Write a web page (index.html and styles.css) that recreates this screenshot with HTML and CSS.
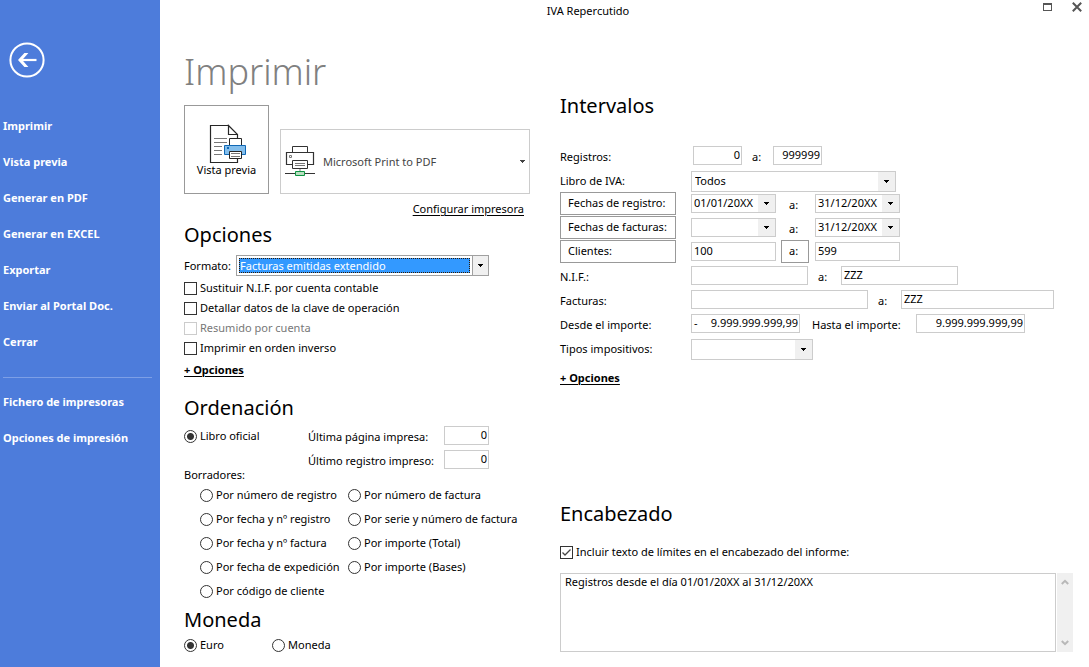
FILE: index.html
```html
<!DOCTYPE html>
<html lang="es">
<head>
<meta charset="utf-8">
<title>IVA Repercutido</title>
<link rel="stylesheet" href="styles.css">
</head>
<body>
<div class="app">
  <nav class="sidebar">
    <button class="back" type="button" aria-label="Volver">
      <svg width="36" height="36" viewBox="0 0 36 36" fill="none" stroke="#fff">
        <circle cx="18" cy="18" r="16.6" stroke-width="2"/>
        <path d="M10.5 18H27.500" stroke-width="2.2"/>
        <path d="M9 18L15.400 11.100H19.400L13.200 18L19.400 24.900H15.400Z" fill="#fff" stroke="none"/>
      </svg>
    </button>
    <a class="nav-link" href="#">Imprimir</a>
    <a class="nav-link" href="#">Vista previa</a>
    <a class="nav-link" href="#">Generar en PDF</a>
    <a class="nav-link" href="#">Generar en EXCEL</a>
    <a class="nav-link" href="#">Exportar</a>
    <a class="nav-link" href="#">Enviar al Portal Doc.</a>
    <a class="nav-link" href="#">Cerrar</a>
    <hr class="nav-rule">
    <a class="nav-link" href="#">Fichero de impresoras</a>
    <a class="nav-link" href="#">Opciones de impresión</a>
  </nav>

  <div class="window">
    <header class="titlebar">
      <span class="window-title">IVA Repercutido</span>
      <div class="window-buttons">
        <button class="window-button" type="button" aria-label="Maximizar">
          <svg width="10" height="10" viewBox="0 0 10 10" shape-rendering="crispEdges"><path d="M1 1.5h8v7h-8z" fill="none" stroke="#555"/><path d="M1 1h8v2h-8z" fill="#555"/></svg>
        </button>
        <button class="window-button" type="button" aria-label="Cerrar ventana">
          <svg width="10" height="10" viewBox="0 0 10 10" fill="none" stroke="#555" stroke-width="2"><path d="M.8.8l8.4 8.4M9.2.8L.8 9.2"/></svg>
        </button>
      </div>
    </header>

    <main class="content">
      <div class="column-left">
        <h1 class="page-title">Imprimir</h1>
        <div class="printer-row">
          <button class="preview" type="button">
            <svg width="38" height="40" viewBox="0 0 38 40" fill="none">
              <path d="M19.5 1.5H1.5v37h27v-5M28.5 14v-3.5l-9-9v9h9" stroke="#262626" stroke-width="1.2"/>
              <path d="M5 14.5h13M5 18.5h13M5 22.5h8M5 26.5h8M5 30.5h8" stroke="#777"/>
              <path d="M20.5 21.5v-7h12v7" fill="#fff" stroke="#262626"/>
              <path d="M15.5 21.5h21v9h-21z" fill="#83beec" stroke="#1068b5"/>
              <path d="M18 23h2v2h-2z" fill="#1068b5"/>
              <path d="M20.5 27.500h12v7h-12z" fill="#fff" stroke="#262626"/>
              <path d="M22 29.500h9M22 32.500h9" stroke="#777"/>
            </svg>
            <span>Vista previa</span>
          </button>
          <button class="printer" type="button">
            <svg width="30" height="31" viewBox="0 0 30 31" fill="none">
              <path d="M7.500 6.500v-6h15v6" fill="#fff" stroke="#333"/>
              <path d="M7.500 18.500h-6v-12h27v12h-6" stroke="#333" stroke-width="1.2"/>
              <path d="M4.500 9.500h2v2h-2z" stroke="#777"/>
              <path d="M7.500 14.500h15v8h-15z" fill="#fff" stroke="#333"/>
              <path d="M10 17.500h10M10 19.500h10" stroke="#777"/>
              <path d="M15 23v3" stroke="#bbb" stroke-width="2"/>
              <path d="M0 27.500h30" stroke="#333"/>
              <path d="M10.500 25.500h9v4h-9z" fill="#b9dfc0" stroke="#0f9444"/>
            </svg>
            <span class="printer-name">Microsoft Print to PDF</span>
            <svg width="5" height="3" viewBox="0 0 5 3" shape-rendering="crispEdges" fill="#444"><path d="M0 0h5v1h-5zM1 1h3v1h-3zM2 2h1v1h-1z"/></svg>
          </button>
        </div>
        <a class="configure" href="#">Configurar impresora</a>

        <h2 class="section-title">Opciones</h2>
        <div class="format-row">
          <label for="formato">Formato:</label>
          <span class="format-box">
            <select class="combo combo-active" id="formato"><option>Facturas emitidas extendido</option></select>
          </span>
        </div>
        <label class="check"><input type="checkbox">Sustituir N.I.F. por cuenta contable</label>
        <label class="check"><input type="checkbox">Detallar datos de la clave de operación</label>
        <label class="check check-disabled"><input type="checkbox" disabled>Resumido por cuenta</label>
        <label class="check"><input type="checkbox">Imprimir en orden inverso</label>
        <a class="more" href="#">+ Opciones</a>

        <h2 class="section-title title-order">Ordenación</h2>
        <div class="order-head">
          <div class="order-kind">
            <label class="check"><input type="radio" name="orden" checked>Libro oficial</label>
            <span>Borradores:</span>
          </div>
          <div class="order-last">
            <label for="ult-pagina">Última página impresa:</label>
            <input class="field number" id="ult-pagina" value="0">
            <label for="ult-registro">Último registro impreso:</label>
            <input class="field number" id="ult-registro" value="0">
          </div>
        </div>
        <div class="drafts">
          <label class="check"><input type="radio" name="orden">Por número de registro</label>
          <label class="check"><input type="radio" name="orden">Por número de factura</label>
          <label class="check"><input type="radio" name="orden">Por fecha y nº registro</label>
          <label class="check"><input type="radio" name="orden">Por serie y número de factura</label>
          <label class="check"><input type="radio" name="orden">Por fecha y nº factura</label>
          <label class="check"><input type="radio" name="orden">Por importe (Total)</label>
          <label class="check"><input type="radio" name="orden">Por fecha de expedición</label>
          <label class="check"><input type="radio" name="orden">Por importe (Bases)</label>
          <label class="check"><input type="radio" name="orden">Por código de cliente</label>
        </div>

        <h2 class="section-title">Moneda</h2>
        <div class="currency">
          <label class="check"><input type="radio" name="moneda" checked>Euro</label>
          <label class="check"><input type="radio" name="moneda">Moneda</label>
        </div>
      </div>

      <div class="column-right">
        <h2 class="section-title">Intervalos</h2>
        <div class="ranges">
          <div class="range range-records">
            <label class="range-label" for="reg-desde">Registros:</label>
            <input class="field number" id="reg-desde" value="0">
            <label class="to" for="reg-hasta">a:</label>
            <input class="field number" id="reg-hasta" value="999999">
          </div>
          <div class="range">
            <label class="range-label" for="libro">Libro de IVA:</label>
            <select class="combo combo-book" id="libro"><option>Todos</option></select>
          </div>
          <div class="range">
            <div class="range-label"><button class="range-button" type="button">Fechas de registro:</button></div>
            <select class="combo date" aria-label="Fecha de registro inicial"><option>01/01/20XX</option></select>
            <label class="to to-wide" for="freg-hasta">a:</label>
            <select class="combo date" id="freg-hasta"><option>31/12/20XX</option></select>
          </div>
          <div class="range">
            <div class="range-label"><button class="range-button" type="button">Fechas de facturas:</button></div>
            <select class="combo date" aria-label="Fecha de factura inicial"><option></option></select>
            <label class="to to-wide" for="ffac-hasta">a:</label>
            <select class="combo date" id="ffac-hasta"><option>31/12/20XX</option></select>
          </div>
          <div class="range">
            <div class="range-label"><button class="range-button" type="button">Clientes:</button></div>
            <input class="field client" aria-label="Cliente inicial" value="100">
            <div class="to to-wide"><button class="range-button to-button" type="button">a:</button></div>
            <input class="field client" aria-label="Cliente final" value="599">
          </div>
          <div class="range">
            <label class="range-label" for="nif-desde">N.I.F.:</label>
            <input class="field tax-id" id="nif-desde">
            <label class="to" for="nif-hasta">a:</label>
            <input class="field tax-id" id="nif-hasta" value="ZZZ">
          </div>
          <div class="range">
            <label class="range-label" for="fac-desde">Facturas:</label>
            <input class="field invoice-from" id="fac-desde">
            <label class="to" for="fac-hasta">a:</label>
            <input class="field invoice-to" id="fac-hasta" value="ZZZ">
          </div>
          <div class="range">
            <label class="range-label" for="imp-desde">Desde el importe:</label>
            <span class="field amount signed"><span>-</span><input class="amount-value" id="imp-desde" value="9.999.999.999,99"></span>
            <label class="to-amount" for="imp-hasta">Hasta el importe:</label>
            <input class="field amount number" id="imp-hasta" value="9.999.999.999,99">
          </div>
          <div class="range">
            <label class="range-label" for="tipos">Tipos impositivos:</label>
            <select class="combo combo-rates" id="tipos"><option></option></select>
          </div>
        </div>
        <a class="more" href="#">+ Opciones</a>

        <section class="heading-block">
          <h2 class="section-title">Encabezado</h2>
          <label class="check"><input type="checkbox" checked>Incluir texto de límites en el encabezado del informe:</label>
          <div class="note">
            <textarea class="note-text" aria-label="Texto del encabezado">Registros desde el día 01/01/20XX al 31/12/20XX</textarea>
            <div class="scrollbar">
              <svg width="8" height="8" viewBox="0 0 8 8" fill="none" stroke="#b8b8b8" stroke-width="2"><path d="M.8 6L4 2.800L7.200 6"/></svg>
              <svg width="8" height="8" viewBox="0 0 8 8" fill="none" stroke="#b8b8b8" stroke-width="2"><path d="M.8 2L4 5.200L7.200 2"/></svg>
            </div>
          </div>
        </section>
      </div>
    </main>
  </div>
</div>
</body>
</html>
```
FILE: styles.css
```css
*,
*::before,
*::after {
  box-sizing: border-box;
}

body {
  margin: 0;
  background: #fff;
  color: #000;
  font: 11px/16px "Noto Sans", "Open Sans", sans-serif;
}

button,
input,
select,
textarea {
  margin: 0;
  color: inherit;
  font: inherit;
}

a {
  color: inherit;
}

.app {
  display: flex;
  min-height: 100vh;
}

/* Navigation */

.sidebar {
  flex: none;
  width: 160px;
  padding: 42px 8px 0 3px;
  background: #4d7cdb;
  color: #fff;
}

.back {
  display: block;
  margin: 0 0 30px 6px;
  padding: 0;
  border: 0;
  background: none;
  line-height: 0;
}

.nav-link {
  display: block;
  font-weight: bold;
  line-height: 36px;
  text-decoration: none;
  white-space: nowrap;
}

.nav-rule {
  height: 1px;
  margin: 17px 0 6px;
  border: 0;
  background: #7d9fe6;
}

/* Title bar */

.window {
  flex: 1;
  min-width: 0;
}

.titlebar {
  display: flex;
  height: 22px;
}

.window-title {
  flex: 1;
  line-height: 22px;
  text-align: center;
}

.window-buttons {
  display: flex;
  align-items: flex-start;
  justify-content: flex-end;
  gap: 20px;
  width: 73px;
  padding: 2px 7px 0 0;
}

.window-button {
  padding: 0;
  border: 0;
  background: none;
  line-height: 0;
}

/* Main area */

.content {
  display: grid;
  grid-template-columns: minmax(0, 376fr) minmax(0, 513fr);
  padding: 0 16px 0 24px;
}

.column-left {
  display: flex;
  flex-direction: column;
  padding-top: 22px;
}

.column-right {
  display: flex;
  flex-direction: column;
  padding-top: 69px;
}

.page-title {
  margin: 0 0 5px;
  color: #808080;
  font-size: 36px;
  font-weight: 300;
  line-height: 56px;
}

.section-title {
  margin: 0;
  font-size: 20px;
  font-weight: 400;
  line-height: 30px;
}

.printer-row {
  display: flex;
  align-items: flex-end;
  gap: 11px;
  padding-right: 30px;
}

.preview {
  display: flex;
  flex-direction: column;
  align-items: center;
  width: 85px;
  height: 89px;
  padding: 18px 0 0;
  border: 1px solid #999;
  background: #fff;
  line-height: 12px;
  white-space: nowrap;
}

.preview svg {
  margin-left: 3px;
}

.printer {
  display: flex;
  flex: 1;
  align-items: center;
  gap: 8px;
  height: 65px;
  padding: 0 4px;
  border: 1px solid #ccc;
  background: #fff;
  color: #444;
  text-align: left;
}

.printer-name {
  flex: 1;
}

.configure {
  align-self: flex-end;
  margin: 4px 36px 0 0;
  line-height: 22px;
  text-underline-offset: 2px;
}

/* Fields */

.field {
  height: 19px;
  padding: 0 2px 1px;
  border: 1px solid #ccc;
  border-radius: 0;
  background: #fff;
}

.number {
  padding-right: 1px;
  text-align: right;
}

.combo {
  height: 21px;
  padding: 0 18px 0 3px;
  border: 1px solid #ccc;
  border-radius: 0;
  appearance: none;
  background:
    url("data:image/svg+xml,%3Csvg xmlns='http://www.w3.org/2000/svg' width='5' height='3' shape-rendering='crispEdges'%3E%3Cpath d='M0 0h5v1h-5zM1 1h3v1h-3zM2 2h1v1h-1z'/%3E%3C/svg%3E") right 6px center no-repeat,
    linear-gradient(#f0f0f0, #f0f0f0) right / 17px 100% no-repeat,
    #fff;
}

.format-row {
  display: flex;
  align-items: center;
  gap: 6px;
  margin: 5px 71px 2px 0;
}

.format-row label {
  width: 46px;
}

.format-box {
  position: relative;
  display: flex;
  flex: 1;
  height: 21px;
}

/* Focus rectangle over the selected value */
.format-box::after {
  position: absolute;
  inset: 3px 19px 3px 3px;
  border: 1px dotted #331a00;
  content: "";
  pointer-events: none;
}

.combo-active {
  flex: 1;
  min-width: 0;
  border-color: #a0a0a0;
  color: #fff;
  background:
    url("data:image/svg+xml,%3Csvg xmlns='http://www.w3.org/2000/svg' width='5' height='3' shape-rendering='crispEdges'%3E%3Cpath d='M0 0h5v1h-5zM1 1h3v1h-3zM2 2h1v1h-1z'/%3E%3C/svg%3E") right 5px center no-repeat,
    linear-gradient(90deg, #a0a0a0 1px, #f0f0f0 1px) right / 16px 100% no-repeat,
    linear-gradient(#39f, #39f) 2px 2px / calc(100% - 20px) calc(100% - 4px) no-repeat,
    #fff;
}

/* Tick boxes and radios */

.check {
  display: flex;
  align-items: center;
  gap: 3px;
  line-height: 20px;
  white-space: nowrap;
}

.check input {
  flex: none;
  width: 13px;
  height: 13px;
  border: 1px solid #333;
  appearance: none;
  background: #fff;
}

.check input[type="radio"] {
  border-radius: 50%;
}

.check input[type="radio"]:checked {
  background: radial-gradient(circle, #333 3px, #fff 4px);
}

.check input[type="checkbox"]:checked {
  background: url("data:image/svg+xml,%3Csvg xmlns='http://www.w3.org/2000/svg' width='11' height='11' fill='none' stroke='%23444' stroke-width='1.3'%3E%3Cpath d='M1.500 5.500L4 8L9.500 2.500'/%3E%3C/svg%3E") center no-repeat;
}

.check-disabled {
  color: #777;
}

.check .check-disabled input,
.check-disabled input:disabled {
  border-color: #ccc;
}

.more {
  align-self: flex-start;
  font-weight: bold;
  line-height: 24px;
  text-underline-offset: 2px;
}

.title-order {
  margin-top: 11px;
}

.order-head {
  display: flex;
  height: 60px;
}

.order-kind {
  display: flex;
  flex-direction: column;
  justify-content: space-between;
  width: 124px;
  padding-top: 3px;
}

.order-last {
  display: grid;
  grid-template-columns: 136px 45px;
  grid-auto-rows: 24px;
  align-items: center;
  white-space: nowrap;
}

.order-last label {
  padding-top: 3px;
}

.drafts {
  display: grid;
  grid-template-columns: 148px 1fr;
  grid-auto-rows: 24px;
  align-items: center;
  margin-bottom: 2px;
  padding-left: 16px;
}

.currency {
  display: grid;
  grid-template-columns: 88px 1fr;
}

/* Ranges */

.ranges {
  display: grid;
  grid-auto-rows: 24px;
  margin: 22px 0 7px;
}

.range {
  display: flex;
  align-items: center;
  white-space: nowrap;
}

.range-label {
  flex: none;
  width: 131px;
}

label.range-label,
label.to,
.to-amount {
  padding-top: 4px;
}

.range-button {
  display: block;
  width: 116px;
  height: 23px;
  padding: 0 7px;
  border: 1px solid #999;
  background: #fff;
  text-align: left;
}

.to {
  flex: none;
  width: 33px;
  padding-left: 10px;
}

.to-wide {
  width: 39px;
  padding-left: 13px;
}

.to-wide:has(button) {
  padding-left: 5px;
}

.to-button {
  width: 28px;
}

.range-records .field {
  width: 49px;
}

.range-records .range-label {
  width: 133px;
}

.range-records .to {
  width: 31px;
}

.combo-book,
.combo-rates {
  margin-top: 4px;
}

.combo-book {
  width: 205px;
}

.date {
  width: 85px;
  height: 19px;
  padding-left: 2px;
}

.client {
  width: 85px;
}

.tax-id {
  width: 117px;
}

.invoice-from {
  width: 177px;
}

.invoice-to {
  width: 153px;
}

.amount {
  width: 109px;
}

.signed {
  display: flex;
  padding-right: 1px;
}

.amount-value {
  flex: 1;
  min-width: 0;
  padding: 0;
  border: 0;
  text-align: right;
}

.to-amount {
  width: 116px;
  padding-left: 12px;
}

.combo-rates {
  width: 122px;
}

/* Report heading */

.heading-block {
  margin-top: 109px;
}

.heading-block .check {
  margin: 13px 0 11px;
}

.note {
  display: flex;
  gap: 1px;
}

.note-text {
  flex: 1;
  height: 79px;
  padding: 0 4px;
  border: 1px solid #ccc;
  border-radius: 0;
  resize: none;
}

.scrollbar {
  display: flex;
  flex-direction: column;
  align-items: center;
  justify-content: space-between;
  width: 16px;
  padding: 5px 0;
  background: #f0f0f0;
}
```
